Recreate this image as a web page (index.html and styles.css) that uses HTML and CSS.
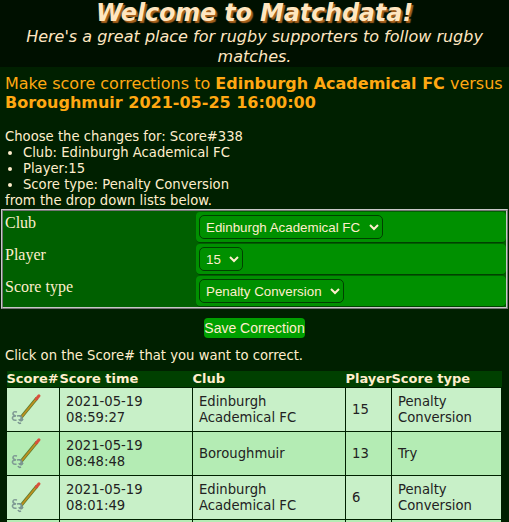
FILE: index.html
```html
<!DOCTYPE html>
<html>
<head>
	<meta charset="UTF-8">
	<title>Matchdata</title>
	<link rel="stylesheet" href="styles.css">
</head>
<body>
	<svg class="defs" width="0" height="0">
		<symbol id="pencil" viewBox="0 0 34 34">
			<path d="M11 24.500 L27 5" stroke="#5f7a2c" stroke-width="3.400"/>
			<path d="M11.500 24 L27.500 4.500" stroke="#c09020" stroke-width="1.800"/>
			<path d="M26.300 6 L29 2.800" stroke="#d8503c" stroke-width="3" stroke-linecap="round"/>
			<path d="M7 19 q-4 -1 -4 1.500 q0 2 3 2.500 q-4 0 -3.500 2.500 q1 2.500 4 1.500" fill="none" stroke="#7f9a94" stroke-width="1.600"/>
			<path d="M7 23 q4 -1 4.500 1.500 q0 2 -2 2.500 q2 2 3.500 -1 M8 29 q1 2 3 1 M11 23 l1.500 3" fill="none" stroke="#7a9490" stroke-width="1.600"/>
		</symbol>
	</svg>
	<header class="banner">
		<h1>Welcome to Matchdata!</h1>
		<p>Here's a great place for rugby supporters to follow rugby matches.</p>
	</header>
	<main class="content">
		<h2>Make score corrections to <b>Edinburgh Academical FC</b> versus <b>Boroughmuir 2021-05-25 16:00:00</b></h2>
		<div class="intro">
			Choose the changes for: Score#338
			<ul>
				<li>Club: Edinburgh Academical FC</li>
				<li>Player:15</li>
				<li>Score type: Penalty Conversion</li>
			</ul>
			from the drop down lists below.
		</div>
		<form class="change-form">
			<div class="form-row">
				<label>Club</label>
				<div class="field"><select><option>Edinburgh Academical FC</option></select></div>
			</div>
			<div class="form-row">
				<label>Player</label>
				<div class="field"><select><option>15</option></select></div>
			</div>
			<div class="form-row">
				<label>Score type</label>
				<div class="field"><select><option>Penalty Conversion</option></select></div>
			</div>
		</form>
		<div class="save-row"><button type="button">Save Correction</button></div>
		<p class="hint">Click on the Score# that you want to correct.</p>
		<table class="scores">
			<thead>
				<tr><th class="c1">Score#</th><th class="c2">Score time</th><th class="c3">Club</th><th class="c4">Player</th><th class="c5">Score type</th></tr>
			</thead>
			<tbody>
				<tr>
					<td class="icon"><svg width="34" height="34"><use href="#pencil"/></svg></td>
					<td>2021-05-19 08:59:27</td><td>Edinburgh Academical FC</td><td>15</td><td>Penalty Conversion</td>
				</tr>
				<tr>
					<td class="icon"><svg width="34" height="34"><use href="#pencil"/></svg></td>
					<td>2021-05-19 08:48:48</td><td>Boroughmuir</td><td>13</td><td>Try</td>
				</tr>
				<tr>
					<td class="icon"><svg width="34" height="34"><use href="#pencil"/></svg></td>
					<td>2021-05-19 08:01:49</td><td>Edinburgh Academical FC</td><td>6</td><td>Penalty Conversion</td>
				</tr>
				<tr class="next-row">
					<td></td><td></td><td></td><td></td><td></td>
				</tr>
			</tbody>
		</table>
	</main>
</body>
</html>
```
FILE: styles.css
```css
html {
	overflow: hidden;
	height: 522px;
}
body {
	margin: 0;
	background: #002000;
	color: #ffeecc;
	font-family: "DejaVu Sans", Verdana, sans-serif;
	font-size: 13.2px;
}
.defs {
	position: absolute;
}
.banner {
	background: #001000;
	height: 67px;
	text-align: center;
	color: #ffe6c0;
}
.banner h1 {
	margin: 0;
	font-size: 24px;
	line-height: 27px;
	letter-spacing: -0.2px;
	font-style: italic;
	font-weight: bold;
	text-shadow: 2px 2px 1px #a8601c;
}
.banner p {
	margin: 0;
	padding: 0 10px;
	font-size: 16px;
	line-height: 20px;
	font-style: italic;
}
h2 {
	margin: 0;
	padding: 7px 5px 0;
	font-size: 16px;
	line-height: 19px;
	font-weight: normal;
	color: #ffa812;
}
.intro {
	margin-top: 17px;
	padding: 0 5px;
	line-height: 16px;
}
.intro ul {
	margin: 0;
	padding: 0 0 0 18px;
}
.change-form {
	margin: 0 1px;
	border: 2px ridge #c8c8c8;
	background: #006000;
}
.form-row {
	display: flex;
	height: 32px;
}
.form-row label {
	width: 193px;
	padding-top: 3px;
	padding-left: 2px;
	box-sizing: border-box;
	font-family: "Liberation Serif", serif;
	font-size: 16px;
	color: #ffeecc;
}
.field {
	flex: 1;
	margin: 1px 0 0;
	padding: 3px;
	background: #009000;
	border-radius: 4px;
	box-shadow: inset 0 -1px 0 #004000;
}
select {
	height: 24px;
	background: #009000;
	color: #ffeecc;
	border: 1px solid #004000;
	border-radius: 5px;
	font-family: "Liberation Sans", sans-serif;
	font-size: 13.33px;
	padding: 0 5px 0 2px;
}
.save-row {
	margin-top: 9px;
	text-align: center;
}
button {
	background: #00a000;
	color: #ffeecc;
	border: none;
	border-radius: 4px;
	font-family: "Liberation Sans", sans-serif;
	font-size: 14px;
	height: 20px;
	width: 101px;
	padding: 0;
}
.hint {
	margin: 10px 5px 0;
	line-height: 16px;
}
.scores {
	margin: 7px 0 0 6px;
	width: 496px;
	table-layout: fixed;
	border-collapse: collapse;
}
.scores th {
	background: #004000;
	color: #ffeecc;
	height: 16px;
	box-sizing: border-box;
	padding: 0;
	font-size: 13px;
	line-height: 16px;
	text-align: left;
	white-space: nowrap;
}
.c1 { width: 53px; }
.c2 { width: 133px; }
.c3 { width: 153px; }
.c4 { width: 46px; }
.scores td {
	height: 44px;
	padding: 0 6px;
	box-sizing: border-box;
	border: 1px solid #002000;
	background: #c8f0c8;
	color: #222;
	line-height: 16px;
}
.scores tr:nth-child(even) td {
	background: #b4ecb4;
}
.scores td.icon {
	padding: 0;
}
.icon svg {
	display: block;
	margin: 1px 0 0 3px;
}
```
